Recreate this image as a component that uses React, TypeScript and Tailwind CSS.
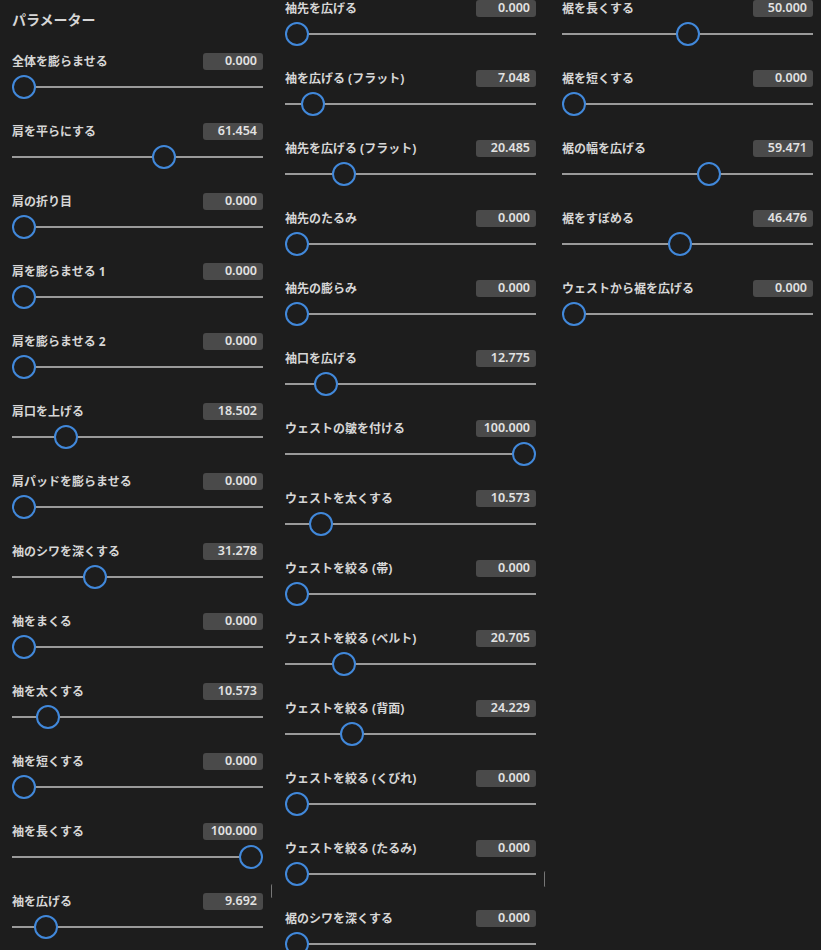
type Param = { label: string; value: number; max?: number };

const col1: Param[] = [
  { label: "全体を膨らませる", value: 0 },
  { label: "肩を平らにする", value: 61.454 },
  { label: "肩の折り目", value: 0 },
  { label: "肩を膨らませる 1", value: 0 },
  { label: "肩を膨らませる 2", value: 0 },
  { label: "肩口を上げる", value: 18.502 },
  { label: "肩パッドを膨らませる", value: 0 },
  { label: "袖のシワを深くする", value: 31.278 },
  { label: "袖をまくる", value: 0 },
  { label: "袖を太くする", value: 10.573 },
  { label: "袖を短くする", value: 0 },
  { label: "袖を長くする", value: 100 },
  { label: "袖を広げる", value: 9.692 },
];

const col2: Param[] = [
  { label: "袖先を広げる", value: 0 },
  { label: "袖を広げる (フラット)", value: 7.048 },
  { label: "袖先を広げる (フラット)", value: 20.485 },
  { label: "袖先のたるみ", value: 0 },
  { label: "袖先の膨らみ", value: 0 },
  { label: "袖口を広げる", value: 12.775 },
  { label: "ウェストの皺を付ける", value: 100 },
  { label: "ウェストを太くする", value: 10.573 },
  { label: "ウェストを絞る (帯)", value: 0 },
  { label: "ウェストを絞る (ベルト)", value: 20.705 },
  { label: "ウェストを絞る (背面)", value: 24.229 },
  { label: "ウェストを絞る (くびれ)", value: 0 },
  { label: "ウェストを絞る (たるみ)", value: 0 },
  { label: "裾のシワを深くする", value: 0 },
];

const col3: Param[] = [
  { label: "裾を長くする", value: 50 },
  { label: "裾を短くする", value: 0 },
  { label: "裾の幅を広げる", value: 59.471 },
  { label: "裾をすぼめる", value: 46.476 },
  { label: "ウェストから裾を広げる", value: 0 },
];

function Slider({ label, value }: Param) {
  // thumb travels inside the 251px track: 251 - 24 = 227
  const left = (value / 100) * 227;
  return (
    <div className="h-[70px] w-[251px]">
      <div className="flex h-[17px] items-center justify-between">
        <span className="text-[12px] font-bold leading-none text-[#d6d6d6]">{label}</span>
        <span className="flex h-[17px] w-[60px] items-center justify-end rounded-[3px] bg-[#4a4a4a] pr-[6px] text-[12.5px] font-semibold leading-none text-[#e2e2e2]">
          {value.toFixed(3)}
        </span>
      </div>
      <div className="relative mt-[5px] h-[24px]">
        <div className="absolute left-0 right-0 top-[11px] h-[2px] bg-[#9a9a9a]" />
        <div
          className="absolute top-0 h-[24px] w-[24px] rounded-full border-2 border-[#4188da] bg-[#1d1d1d]"
          style={{ left }}
        />
      </div>
    </div>
  );
}

export default function App() {
  return (
    <div
      className="relative h-[950px] w-[821px] overflow-hidden bg-[#1d1d1d]"
      style={{ fontFamily: '"Noto Sans", "Noto Sans CJK JP", sans-serif' }}
    >
      <div className="flex">
        <div className="ml-[12px] pt-[10px]">
          <h1 className="mb-[23px] h-[20px] text-[14px] font-bold leading-[20px] text-[#d6d6d6]">パラメーター</h1>
          {col1.map((p) => (
            <Slider key={p.label} {...p} />
          ))}
        </div>
        <div className="ml-[22px]">
          {col2.map((p) => (
            <Slider key={p.label} {...p} />
          ))}
        </div>
        <div className="ml-[26px]">
          {col3.map((p) => (
            <Slider key={p.label} {...p} />
          ))}
        </div>
      </div>
      {/* stray scrollbar slivers */}
      <div className="absolute left-[271px] top-[884px] h-[14px] w-[3px] rounded-full border-l border-[#777]" />
      <div className="absolute left-[544px] top-[871px] h-[16px] w-[3px] rounded-full border-l border-[#777]" />
    </div>
  );
}
